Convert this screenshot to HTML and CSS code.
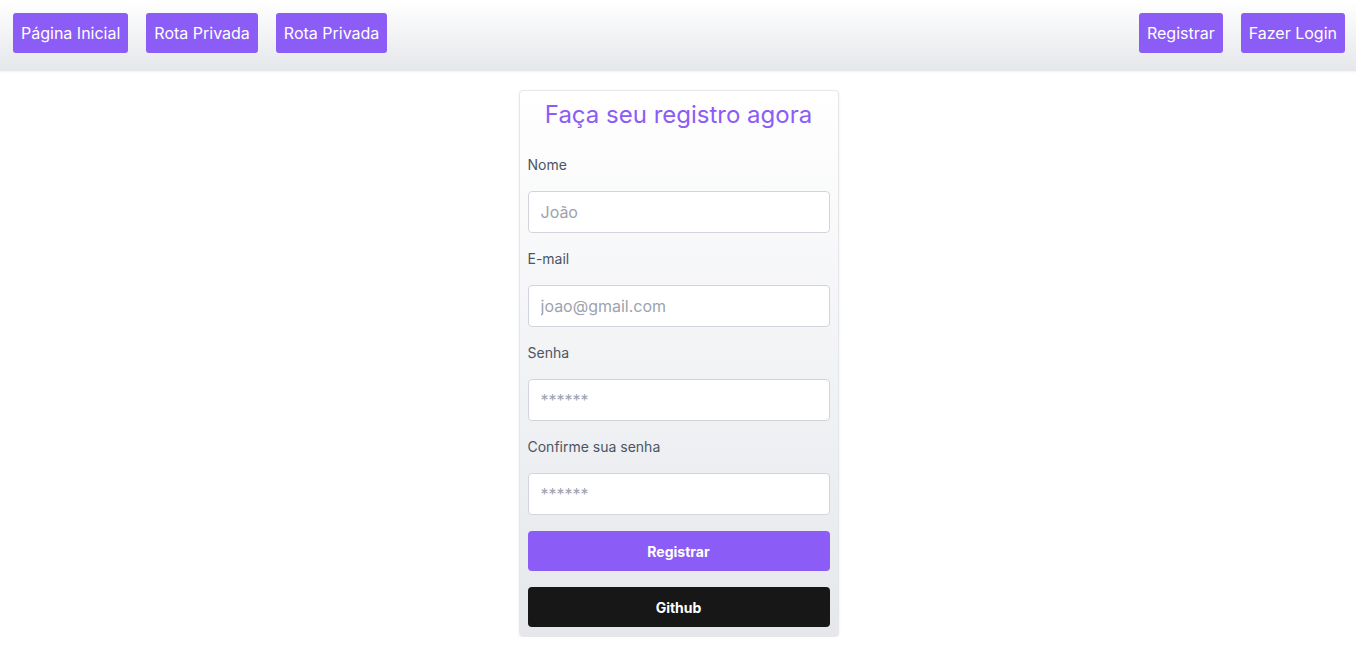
FILE: index.html
```html
<!DOCTYPE html>
<html lang="pt-BR">
<head>
<meta charset="utf-8">
<title>Registro</title>
<link rel="stylesheet" href="styles.css">
</head>
<body>
<header class="topbar">
  <nav class="nav-group">
    <a class="nav-btn" href="#">Página Inicial</a>
    <a class="nav-btn" href="#">Rota Privada</a>
    <a class="nav-btn" href="#">Rota Privada</a>
  </nav>
  <nav class="nav-group">
    <a class="nav-btn" href="#">Registrar</a>
    <a class="nav-btn" href="#">Fazer Login</a>
  </nav>
</header>
<main class="main">
  <form class="card">
    <h1 class="card-title">Faça seu registro agora</h1>
    <label class="field-label" for="nome">Nome</label>
    <input class="field-input" id="nome" type="text" placeholder="João">
    <label class="field-label" for="email">E-mail</label>
    <input class="field-input" id="email" type="email" placeholder="joao@gmail.com">
    <label class="field-label" for="senha">Senha</label>
    <input class="field-input" id="senha" type="password" placeholder="******">
    <label class="field-label" for="confirma">Confirme sua senha</label>
    <input class="field-input" id="confirma" type="password" placeholder="******">
    <button class="btn btn-primary" type="button">Registrar</button>
    <button class="btn btn-dark" type="button">Github</button>
  </form>
</main>
</body>
</html>
```

FILE: styles.css
```css
* { box-sizing: border-box; }
html, body { margin: 0; padding: 0; }
body {
  font-family: Inter, "Noto Sans", sans-serif;
  background: #ffffff;
  color: #4b5563;
}
.topbar {
  height: 71px;
  display: flex;
  justify-content: space-between;
  align-items: flex-start;
  padding: 13px 11px 0 13px;
  background: linear-gradient(to bottom, #ffffff, #e5e7eb);
  box-shadow: 0 1px 2px rgba(0,0,0,0.06);
}
.nav-group {
  display: flex;
  gap: 18px;
}
.nav-btn {
  display: inline-flex;
  align-items: center;
  height: 40px;
  padding: 0 8px;
  background: #8b5cf6;
  color: #ffffff;
  font-size: 16px;
  text-decoration: none;
  border-radius: 3px;
}
.main {
  display: flex;
  justify-content: center;
  padding-top: 19px;
  padding-left: 1px;
}
.card {
  width: 320px;
  display: flex;
  flex-direction: column;
  padding: 8px 8px 9px;
  border: 1px solid #e5e7eb;
  border-radius: 4px;
  background: linear-gradient(to bottom, #ffffff, #e5e7eb);
  box-shadow: 0 1px 3px rgba(0,0,0,0.08);
}
.card-title {
  margin: 0 0 24px;
  font-size: 24px;
  line-height: 32px;
  font-weight: 400;
  color: #8b5cf6;
  text-align: center;
}
.field-label {
  font-size: 14px;
  line-height: 20px;
  color: #4b5563;
  margin-bottom: 16px;
}
.field-input {
  height: 42px;
  padding: 0 12px;
  border: 1px solid #d1d5db;
  border-radius: 4px;
  background: #ffffff;
  font-family: inherit;
  font-size: 16px;
  color: #111827;
  margin-bottom: 16px;
  outline: none;
}
.field-input::placeholder { color: #9ca3af; }
.btn {
  height: 40px;
  border: none;
  border-radius: 4px;
  font-family: inherit;
  font-size: 14px;
  font-weight: 700;
  color: #ffffff;
  cursor: pointer;
}
.btn-primary { background: #8b5cf6; margin-bottom: 16px; }
.btn-dark { background: #171717; }
```
